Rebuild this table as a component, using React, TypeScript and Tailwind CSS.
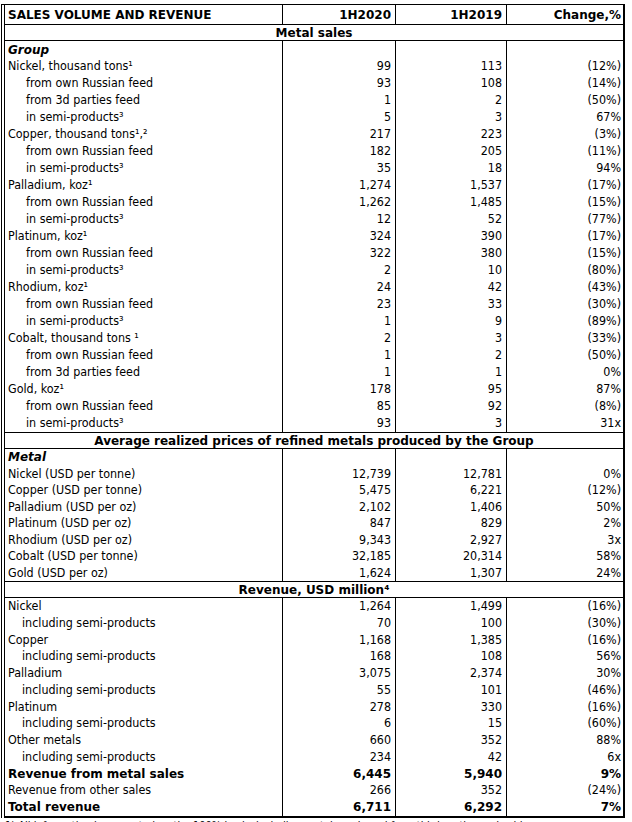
import React from "react";

type Row = {
  label: string;
  a?: string;
  b?: string;
  c?: string;
  indent?: number;
  bold?: boolean;
  sub?: boolean;
};

const groupRows: Row[] = [
  { label: "Group", sub: true },
  { label: "Nickel, thousand tons¹", a: "99", b: "113", c: "(12%)" },
  { label: "from own Russian feed", a: "93", b: "108", c: "(14%)", indent: 1 },
  { label: "from 3d parties feed", a: "1", b: "2", c: "(50%)", indent: 1 },
  { label: "in semi-products³", a: "5", b: "3", c: "67%", indent: 1 },
  { label: "Copper, thousand tons¹,²", a: "217", b: "223", c: "(3%)" },
  { label: "from own Russian feed", a: "182", b: "205", c: "(11%)", indent: 1 },
  { label: "in semi-products³", a: "35", b: "18", c: "94%", indent: 1 },
  { label: "Palladium, koz¹", a: "1,274", b: "1,537", c: "(17%)" },
  { label: "from own Russian feed", a: "1,262", b: "1,485", c: "(15%)", indent: 1 },
  { label: "in semi-products³", a: "12", b: "52", c: "(77%)", indent: 1 },
  { label: "Platinum, koz¹", a: "324", b: "390", c: "(17%)" },
  { label: "from own Russian feed", a: "322", b: "380", c: "(15%)", indent: 1 },
  { label: "in semi-products³", a: "2", b: "10", c: "(80%)", indent: 1 },
  { label: "Rhodium, koz¹", a: "24", b: "42", c: "(43%)" },
  { label: "from own Russian feed", a: "23", b: "33", c: "(30%)", indent: 1 },
  { label: "in semi-products³", a: "1", b: "9", c: "(89%)", indent: 1 },
  { label: "Cobalt, thousand tons ¹", a: "2", b: "3", c: "(33%)" },
  { label: "from own Russian feed", a: "1", b: "2", c: "(50%)", indent: 1 },
  { label: "from 3d parties feed", a: "1", b: "1", c: "0%", indent: 1 },
  { label: "Gold, koz¹", a: "178", b: "95", c: "87%" },
  { label: "from own Russian feed", a: "85", b: "92", c: "(8%)", indent: 1 },
  { label: "in semi-products³", a: "93", b: "3", c: "31x", indent: 1 },
];

const priceRows: Row[] = [
  { label: "Metal", sub: true },
  { label: "Nickel (USD per tonne)", a: "12,739", b: "12,781", c: "0%" },
  { label: "Copper (USD per tonne)", a: "5,475", b: "6,221", c: "(12%)" },
  { label: "Palladium (USD per oz)", a: "2,102", b: "1,406", c: "50%" },
  { label: "Platinum (USD per oz)", a: "847", b: "829", c: "2%" },
  { label: "Rhodium (USD per oz)", a: "9,343", b: "2,927", c: "3x" },
  { label: "Cobalt (USD per tonne)", a: "32,185", b: "20,314", c: "58%" },
  { label: "Gold (USD per oz)", a: "1,624", b: "1,307", c: "24%" },
];

const revenueRows: Row[] = [
  { label: "Nickel", a: "1,264", b: "1,499", c: "(16%)" },
  { label: "including semi-products", a: "70", b: "100", c: "(30%)", indent: 2 },
  { label: "Copper", a: "1,168", b: "1,385", c: "(16%)" },
  { label: "including semi-products", a: "168", b: "108", c: "56%", indent: 2 },
  { label: "Palladium", a: "3,075", b: "2,374", c: "30%" },
  { label: "including semi-products", a: "55", b: "101", c: "(46%)", indent: 2 },
  { label: "Platinum", a: "278", b: "330", c: "(16%)" },
  { label: "including semi-products", a: "6", b: "15", c: "(60%)", indent: 2 },
  { label: "Other metals", a: "660", b: "352", c: "88%" },
  { label: "including semi-products", a: "234", b: "42", c: "6x", indent: 2 },
  { label: "Revenue from metal sales", a: "6,445", b: "5,940", c: "9%", bold: true },
  { label: "Revenue from other sales", a: "266", b: "352", c: "(24%)" },
  { label: "Total revenue", a: "6,711", b: "6,292", c: "7%", bold: true },
];

// bold text in the sheet is wider than the regular one
const B = "font-bold font-['DejaVu_Sans',sans-serif] text-[12px]";

function DataRow({ row, h }: { row: Row; h: string }) {
  const pad = row.indent === 1 ? "pl-[21px]" : row.indent === 2 ? "pl-[17px]" : "pl-[3px]";
  const weight = row.bold || row.sub ? B : "";
  return (
    <div className={`grid grid-cols-[278px_113px_111px_117px] ${h} leading-none ${weight}`}>
      <div className={`border-r border-black flex items-center whitespace-nowrap ${pad} ${row.sub ? "italic" : ""}`}>
        {row.label}
      </div>
      <div className="border-r border-black flex items-center justify-end pr-[4px]">{row.a}</div>
      <div className="border-r border-black flex items-center justify-end pr-[4px]">{row.b}</div>
      <div className="flex items-center justify-end pr-[3px]">{row.c}</div>
    </div>
  );
}

function SectionHead({ title, h }: { title: React.ReactNode; h: string }) {
  return (
    <div className={`${h} border-b border-black flex items-center justify-center leading-none ${B}`}>
      {title}
    </div>
  );
}

export default function App() {
  return (
    <div className="w-[632px] h-[822px] overflow-hidden bg-white text-black text-[12.4px] font-['DejaVu_Sans_Condensed','DejaVu_Sans',sans-serif]">
      <div className="mt-[4px] ml-[1px] w-[624px] border-l border-t border-black pl-[2px]">
        <div className="border-l border-r-2 border-b-2 border-black">
          <div className={`grid grid-cols-[278px_113px_111px_117px] h-[20px] border-b border-black leading-none ${B}`}>
            <div className="border-r border-black flex items-center pl-[3px] whitespace-nowrap">SALES VOLUME AND REVENUE</div>
            <div className="border-r border-black flex items-center justify-end pr-[4px]">1H2020</div>
            <div className="border-r border-black flex items-center justify-end pr-[4px]">1H2019</div>
            <div className="flex items-center justify-end pr-[3px]">Change,%</div>
          </div>
          <SectionHead title="Metal sales" h="h-[16px]" />
          <div className="h-[392px] flex flex-col border-b border-black">
            {groupRows.map((r, i) => (
              <DataRow key={i} row={r} h="h-[17px]" />
            ))}
          </div>
          <SectionHead title="Average realized prices of refined metals produced by the Group" h="h-[16px]" />
          <div className="h-[133px] flex flex-col border-b border-black">
            {priceRows.map((r, i) => (
              <DataRow key={i} row={r} h="h-[16.6px]" />
            ))}
          </div>
          <SectionHead title="Revenue, USD million⁴" h="h-[16px]" />
          <div className="flex flex-col">
            {revenueRows.map((r, i) => (
              <DataRow key={i} row={r} h="h-[16.75px]" />
            ))}
          </div>
        </div>
      </div>
      <div className="pl-[5px] pt-[1px] whitespace-nowrap leading-[14px] text-[11px]">
        1) All information is presented on the 100% basis, including metal purchased from third parties and sold on
      </div>
    </div>
  );
}
